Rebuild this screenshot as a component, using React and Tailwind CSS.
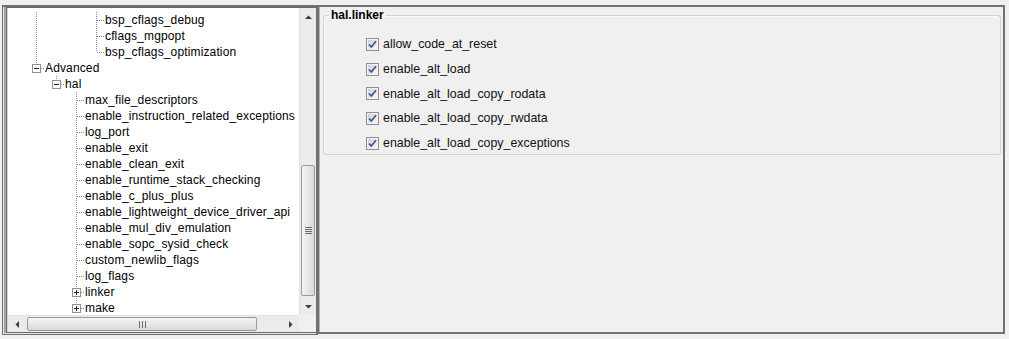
import React from 'react'

const treeRows = [
  { label: 'bsp_cflags_debug', guides: [true, false, false], last: false },
  { label: 'cflags_mgpopt', guides: [true, false, false], last: false },
  { label: 'bsp_cflags_optimization', guides: [true, false, false], last: true },
  { label: 'Advanced', guides: [], last: true, toggle: 'minus' },
  { label: 'hal', guides: [false], last: true, toggle: 'minus' },
  { label: 'max_file_descriptors', guides: [false, false], last: false },
  { label: 'enable_instruction_related_exceptions', guides: [false, false], last: false },
  { label: 'log_port', guides: [false, false], last: false },
  { label: 'enable_exit', guides: [false, false], last: false },
  { label: 'enable_clean_exit', guides: [false, false], last: false },
  { label: 'enable_runtime_stack_checking', guides: [false, false], last: false },
  { label: 'enable_c_plus_plus', guides: [false, false], last: false },
  { label: 'enable_lightweight_device_driver_api', guides: [false, false], last: false },
  { label: 'enable_mul_div_emulation', guides: [false, false], last: false },
  { label: 'enable_sopc_sysid_check', guides: [false, false], last: false },
  { label: 'custom_newlib_flags', guides: [false, false], last: false },
  { label: 'log_flags', guides: [false, false], last: false },
  { label: 'linker', guides: [false, false], last: false, toggle: 'plus' },
  { label: 'make', guides: [false, false], last: true, toggle: 'plus' },
]

const linkerOptions = [
  'allow_code_at_reset',
  'enable_alt_load',
  'enable_alt_load_copy_rodata',
  'enable_alt_load_copy_rwdata',
  'enable_alt_load_copy_exceptions',
]

const DOT = '#8c8c8c'

// one 20px ancestor column: vertical dotted guide or nothing
function Guide({ on }) {
  return (
    <svg width="20" height="16" className="shrink-0" shapeRendering="crispEdges">
      {on && <line x1="10.5" y1="0" x2="10.5" y2="16" stroke={DOT} strokeDasharray="1 1" />}
    </svg>
  )
}

// the row's own connector, with optional +/- box
function Connector({ last, toggle }) {
  return (
    <svg width="19" height="16" className="shrink-0" shapeRendering="crispEdges">
      <line x1="10.5" y1="0" x2="10.5" y2={toggle ? 4 : last ? 8 : 16} stroke={DOT} strokeDasharray="1 1" />
      {toggle && !last && (
        <line x1="10.5" y1="14" x2="10.5" y2="16" stroke={DOT} strokeDasharray="1 1" />
      )}
      <line x1={toggle ? 15 : 11} y1="8.5" x2="19" y2="8.5" stroke={DOT} strokeDasharray="1 1" />
      {toggle && (
        <>
          <rect x="6.5" y="4.5" width="8" height="8" fill="#fff" stroke="#919191" />
          <line x1="8" y1="8.5" x2="13" y2="8.5" stroke="#222" />
          {toggle === 'plus' && <line x1="10.5" y1="6" x2="10.5" y2="11" stroke="#222" />}
        </>
      )}
    </svg>
  )
}

function Arrow({ dir }) {
  const pts = {
    up: '0,4 7,4 3.5,0.5',
    down: '0,0 7,0 3.5,3.5',
    left: '4,0 4,7 0.5,3.5',
    right: '0,0 0,7 3.5,3.5',
  }[dir]
  const vertical = dir === 'up' || dir === 'down'
  return (
    <svg width={vertical ? 7 : 4} height={vertical ? 4 : 7}>
      <polygon points={pts} fill="#3c3c3c" />
    </svg>
  )
}

function CheckBox() {
  return (
    <svg width="13" height="13" className="shrink-0" shapeRendering="crispEdges">
      <defs>
        <linearGradient id="cbfill" x1="0" y1="0" x2="1" y2="1">
          <stop offset="0" stopColor="#cdd1d8" />
          <stop offset="1" stopColor="#f7f7f7" />
        </linearGradient>
      </defs>
      <rect x="0.5" y="0.5" width="12" height="12" fill="#f4f4f4" stroke="#8e8f8f" />
      <rect x="2" y="2" width="9" height="9" fill="url(#cbfill)" />
      <path d="M3 6.5 L5.3 9 L10 3.3" fill="none" stroke="#3e5490" strokeWidth="1.7" shapeRendering="auto" />
    </svg>
  )
}

function VScrollBar() {
  return (
    <div className="w-[17px] flex flex-col bg-[#ebebeb] border-l border-[#e2e2e2]">
      <div className="h-[17px] flex items-center justify-center">
        <Arrow dir="up" />
      </div>
      <div className="h-[140px]" />
      <div className="h-[131px] mx-[1px] rounded-[2px] border border-[#999] bg-linear-to-r from-[#f4f4f4] to-[#d9d9d9] flex flex-col items-center justify-center gap-[1px]">
        <div className="w-[7px] h-px bg-[#6e6e6e]" />
        <div className="w-[7px] h-px bg-[#6e6e6e]" />
        <div className="w-[7px] h-px bg-[#6e6e6e]" />
        <div className="w-[7px] h-px bg-[#6e6e6e]" />
      </div>
      <div className="flex-1" />
      <div className="h-[17px] flex items-center justify-center">
        <Arrow dir="down" />
      </div>
    </div>
  )
}

function HScrollBar() {
  return (
    <div className="h-[17px] flex bg-[#ebebeb] border-t border-[#e2e2e2]">
      <div className="w-[17px] flex items-center justify-center">
        <Arrow dir="left" />
      </div>
      <div className="w-[2px]" />
      <div className="w-[230px] my-[1px] rounded-[2px] border border-[#999] bg-linear-to-b from-[#f4f4f4] to-[#d9d9d9] flex items-center justify-center gap-[2px]">
        <div className="w-px h-[7px] bg-[#6e6e6e]" />
        <div className="w-px h-[7px] bg-[#6e6e6e]" />
        <div className="w-px h-[7px] bg-[#6e6e6e]" />
      </div>
      <div className="flex-1" />
      <div className="w-[17px] flex items-center justify-center">
        <Arrow dir="right" />
      </div>
    </div>
  )
}

function TreePanel() {
  return (
    <div className="w-[316px] h-[330px] shrink-0 border-l border-t-2 border-r-2 border-b border-[#707070] flex">
      <div className="flex-1 flex border-l border-b border-[#e6e6e6]">
        <div className="flex-1 flex border-l-2 border-[#a4a4a4]">
          <div className="flex-1 flex border-l border-t border-b border-[#6a6a6a]">
            <div className="flex-1 flex flex-col border-l border-[#d6d6d6] min-w-0">
              <div className="flex flex-1 min-h-0">
                <div className="flex-1 bg-white overflow-hidden pt-[4px] pl-[18px] font-['Liberation_Sans',Arial,sans-serif] text-[12px] tracking-[0.14px] text-black">
                  {treeRows.map((row) => (
                    <div key={row.label} className="flex items-center h-[16px] leading-[16px] whitespace-nowrap">
                      {row.guides.map((on, i) => (
                        <Guide key={i} on={on} />
                      ))}
                      <Connector last={row.last} toggle={row.toggle} />
                      <span>{row.label}</span>
                    </div>
                  ))}
                </div>
                <VScrollBar />
              </div>
              <div className="flex">
                <div className="flex-1">
                  <HScrollBar />
                </div>
                <div className="w-[17px] h-[17px] bg-[#f0f0f0]" />
              </div>
            </div>
          </div>
        </div>
      </div>
    </div>
  )
}

function PropertiesPanel() {
  return (
    <div className="w-[687px] h-[329px] shrink-0 border-l border-t-2 border-r-2 border-b-2 border-[#727272]">
      <div className="h-full border-l border-[#b4b4b4] pl-[3px] pr-[2px] pt-px">
        <fieldset className="border border-[#d2d2d2] rounded-[3px] shadow-[inset_1px_1px_0_#fafafa]">
          <legend className="ml-[5px] px-[2px] text-[12px] leading-[14px] font-bold text-black font-['Liberation_Sans',Arial,sans-serif]">
            hal.linker
          </legend>
          <div className="pt-[10px] pl-[42px] -mb-[2px] flex flex-col">
            {linkerOptions.map((opt) => (
              <label key={opt} className="h-[24.75px] flex items-center gap-[4px] text-[12.4px] text-[#111] font-['Liberation_Sans',Arial,sans-serif]">
                <CheckBox />
                <span>{opt}</span>
              </label>
            ))}
          </div>
        </fieldset>
      </div>
    </div>
  )
}

export default function App() {
  return (
    <div className="w-[1009px] h-[339px] bg-[#f0f0f0] pl-[2px] pt-[5px] flex overflow-hidden">
      <TreePanel />
      <PropertiesPanel />
    </div>
  )
}
